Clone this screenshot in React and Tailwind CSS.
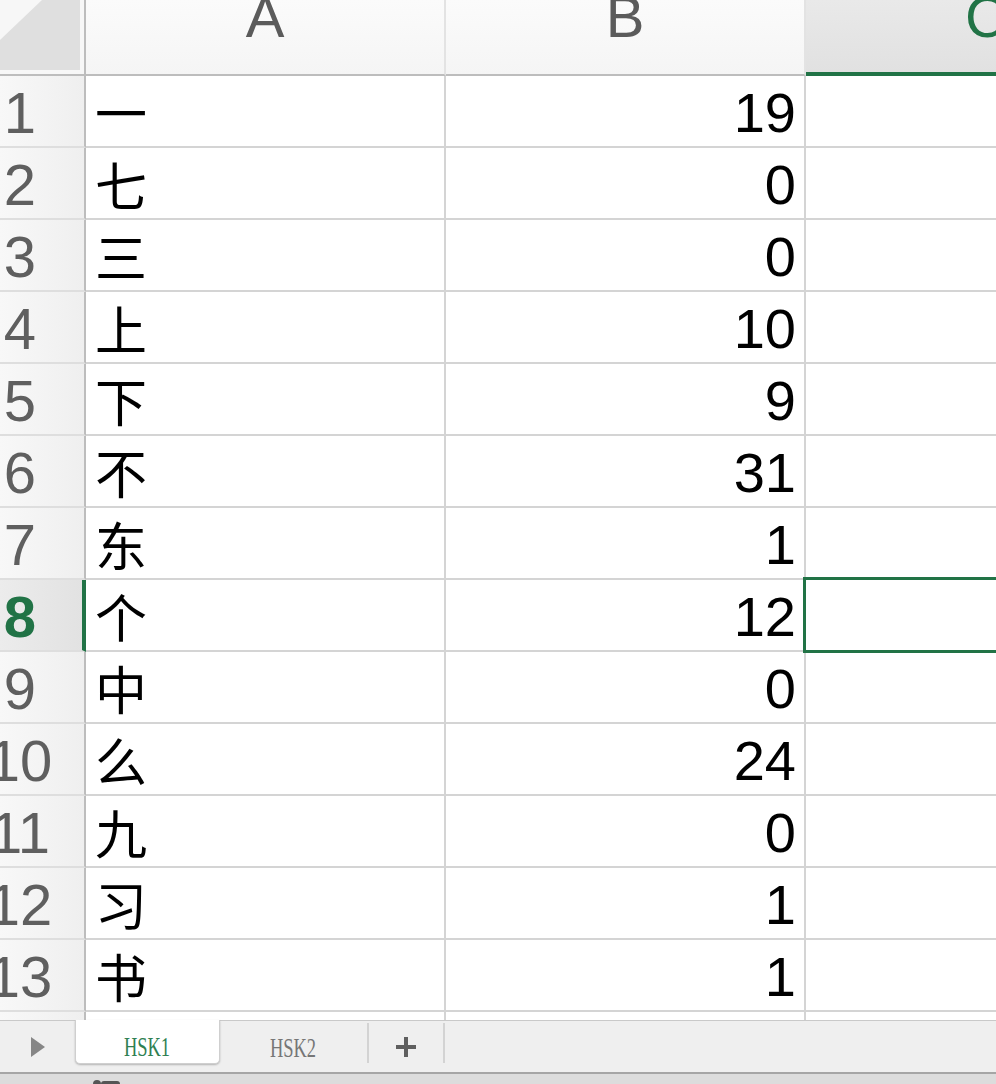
const rows = [
  ['一', '19'],
  ['七', '0'],
  ['三', '0'],
  ['上', '10'],
  ['下', '9'],
  ['不', '31'],
  ['东', '1'],
  ['个', '12'],
  ['中', '0'],
  ['么', '24'],
  ['九', '0'],
  ['习', '1'],
  ['书', '1'],
  ['', ''],
]

const SELECTED_ROW = 8
const green = 'text-[#217346]'

function Corner() {
  return (
    <div className="w-[86px] h-full shrink-0 border-r-2 border-b-2 border-[#bdbdbd] bg-[#f7f7f7]">
      <svg width="84" height="74" viewBox="0 0 84 74">
        <polygon points="42,0 80,0 80,70 0,70 0,40" fill="#dfdfdf" />
      </svg>
    </div>
  )
}

function ColHead({ label, active }) {
  if (active) {
    return (
      <div className="w-[360px] shrink-0 h-full border-b-4 border-[#217346] bg-gradient-to-b from-[#e9e9e9] to-[#e1e1e1] flex items-end justify-center pb-[26px] overflow-hidden">
        <span className={`text-[58px] leading-none ${green}`}>{label}</span>
      </div>
    )
  }
  return (
    <div className="w-[360px] shrink-0 h-full border-r-2 border-r-[#e3e3e3] border-b-2 border-b-[#bdbdbd] bg-gradient-to-b from-[#fbfbfb] to-[#f5f5f5] flex items-end justify-center pb-[28px] overflow-hidden">
      <span className="text-[58px] leading-none text-[#5b5b5b]">{label}</span>
    </div>
  )
}

function Row({ n, hanzi, count }) {
  const sel = n === SELECTED_ROW
  return (
    <div className="flex h-[72px] shrink-0">
      <div
        className={
          'w-[86px] shrink-0 h-full border-b-2 border-b-[#dedede] overflow-hidden flex items-end pb-[4px] ' +
          (sel
            ? 'border-r-4 border-r-[#217346] bg-gradient-to-r from-[#ececec] to-[#e2e2e2]'
            : 'border-r-2 border-r-[#bdbdbd] bg-gradient-to-r from-[#f8f8f8] to-[#efefef]')
        }
      >
        <div className="w-[40px] flex justify-center">
          <span
            className={
              'text-[58px] leading-none whitespace-nowrap ' +
              (sel ? 'text-[#217346] font-bold' : 'text-[#5f5f5f]')
            }
          >
            {n}
          </span>
        </div>
      </div>
      <div className="w-[360px] shrink-0 h-full border-r-2 border-b-2 border-[#d4d4d4] flex items-end pl-[9px] pb-[8px]">
        <span className="text-[52px] leading-none text-black font-['Noto_Sans_CJK_SC',sans-serif]">{hanzi}</span>
      </div>
      <div className="w-[360px] shrink-0 h-full border-r-2 border-b-2 border-[#d4d4d4] flex items-end justify-end pr-[8px] pb-[5px]">
        <span className="text-[56px] leading-none text-black">{count}</span>
      </div>
      <div className="w-[360px] shrink-0 h-full border-r-2 border-b-2 border-[#d4d4d4]" />
    </div>
  )
}

function SheetTabs() {
  return (
    <div className="h-[52px] shrink-0 bg-[#efefef] border-t border-[#c9c9c9] flex items-start">
      <div className="w-[75px] h-full flex items-center justify-center pt-[1px]">
        <svg width="14" height="20" viewBox="0 0 14 20">
          <polygon points="0,0 14,10 0,20" fill="#868686" />
        </svg>
      </div>
      <div className="w-[145px] h-[44px] -mt-px bg-white rounded-b-[5px] border-x border-b border-[#cfcfcf] shadow-[0_1px_2px_rgba(0,0,0,0.25)] flex items-center justify-center pt-[10px]">
        <span className="inline-block scale-x-[0.66] text-[28px] leading-none text-[#2f7f52] font-['Liberation_Serif',serif]">HSK1</span>
      </div>
      <div className="w-[147px] h-[44px] flex items-center justify-center pt-[10px]">
        <span className="inline-block scale-x-[0.66] text-[28px] leading-none text-[#767676] font-['Liberation_Serif',serif]">HSK2</span>
      </div>
      <div className="w-[2px] h-[40px] mt-[2px] bg-[#d3d3d3]" />
      <div className="w-[74px] h-full flex items-center justify-center">
        <svg width="20" height="20" viewBox="0 0 20 20">
          <rect x="8" y="0" width="4" height="20" fill="#5f5f5f" />
          <rect x="0" y="8" width="20" height="4" fill="#5f5f5f" />
        </svg>
      </div>
      <div className="w-[2px] h-[40px] mt-[2px] bg-[#d3d3d3]" />
    </div>
  )
}

export default function App() {
  return (
    <div className="w-[996px] h-[1084px] overflow-hidden flex flex-col bg-white font-['Liberation_Sans',Arial,sans-serif]">
      <div className="relative h-[1020px] shrink-0 overflow-hidden">
        <div className="flex h-[76px] w-[1200px]">
          <Corner />
          <ColHead label="A" />
          <ColHead label="B" />
          <ColHead label="C" active />
        </div>
        <div className="flex flex-col w-[1200px]">
          {rows.map(([h, c], i) => (
            <Row key={i} n={i + 1} hanzi={h} count={c} />
          ))}
        </div>
        <div className="absolute left-[803px] top-[577px] w-[400px] h-[76px] border-[3px] border-[#217346]" />
      </div>
      <SheetTabs />
      <div className="flex-1 border-t-2 border-[#a5a5a5] bg-[#dcdcdc] relative">
        <div className="absolute left-[93px] top-[6px] w-[8px] h-[8px] rounded-full bg-[#555]" />
        <div className="absolute left-[101px] top-[7px] w-[19px] h-[6px] rounded-sm bg-[#555]" />
      </div>
    </div>
  )
}
